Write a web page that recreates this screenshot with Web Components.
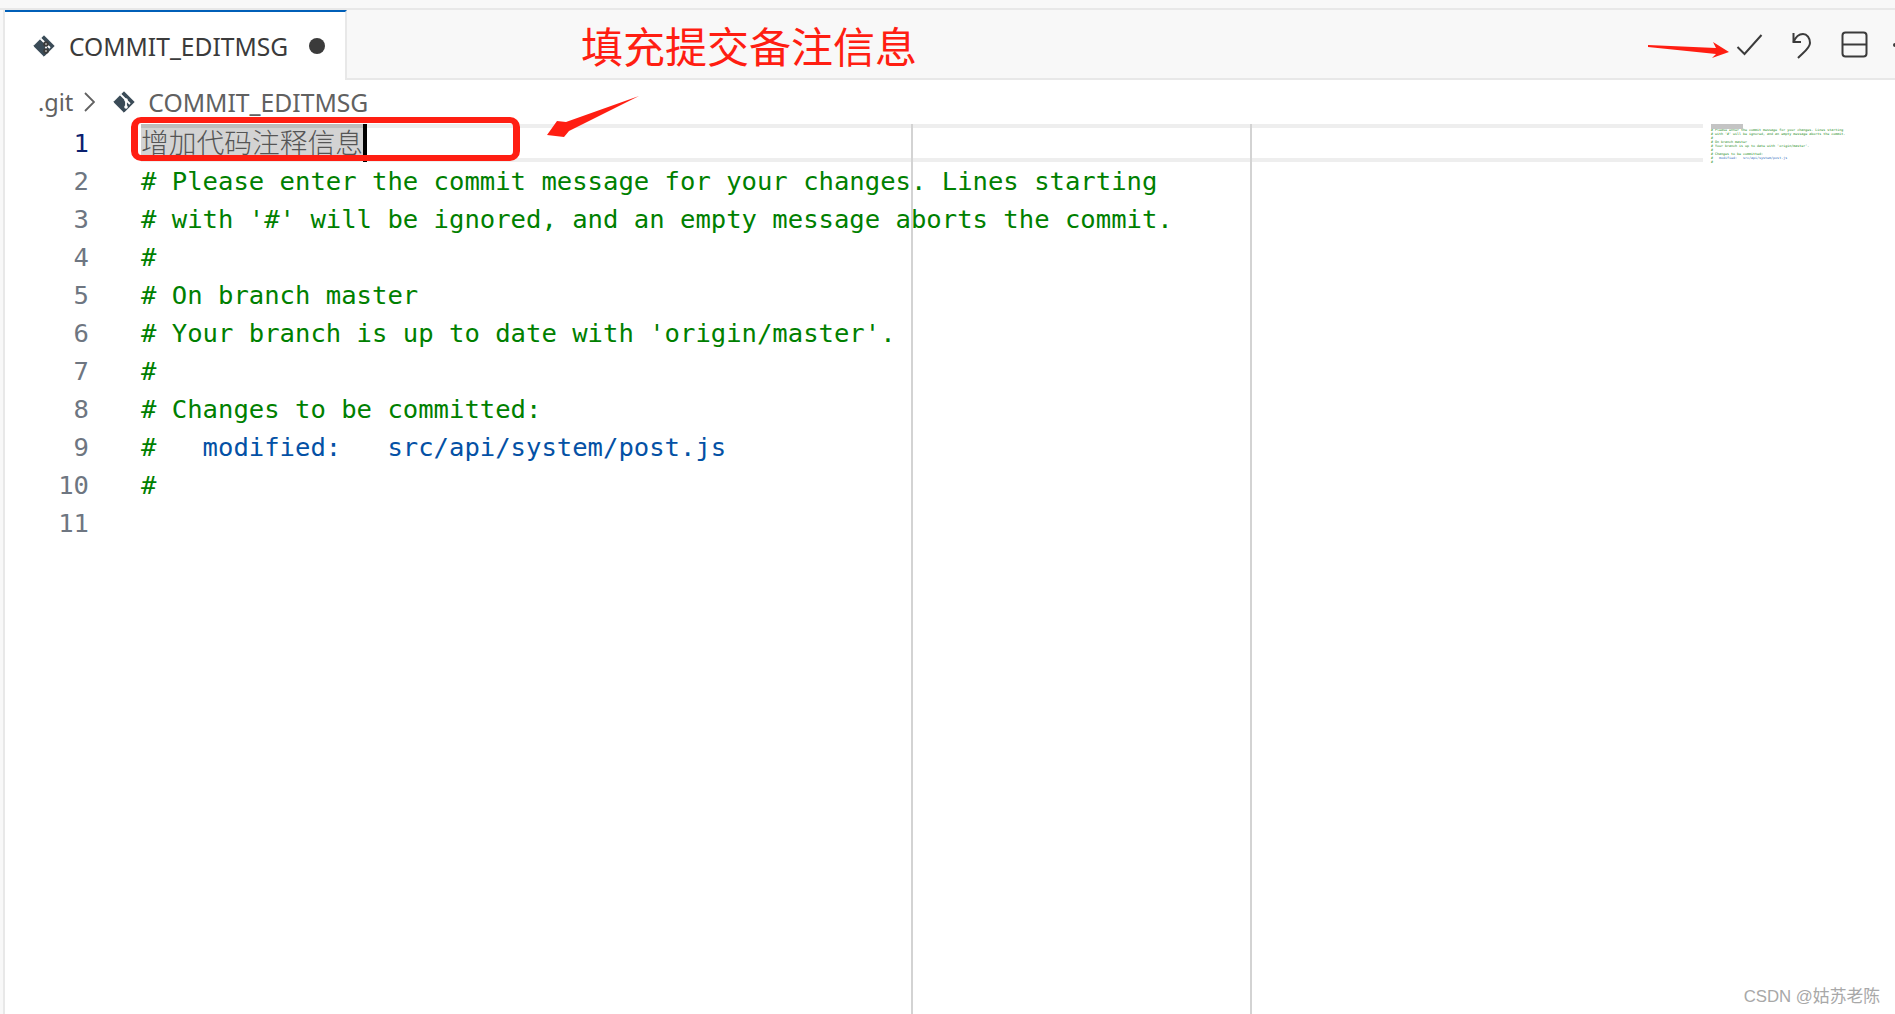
<!DOCTYPE html>
<html lang="zh">
<head>
<meta charset="utf-8">
<title>COMMIT_EDITMSG</title>
<style>
  html, body { margin: 0; height: 100%; overflow: hidden; background: #fff; }
</style>
</head>
<body>
<editor-window>
  <tab-bar slot="tabs"></tab-bar>
  <bread-crumbs slot="crumbs"></bread-crumbs>
  <code-editor slot="editor">
    <code-line n="1" active><span class="sel">增加代码注释信息</span></code-line>
    <code-line n="2"># Please enter the commit message for your changes. Lines starting</code-line>
    <code-line n="3"># with '#' will be ignored, and an empty message aborts the commit.</code-line>
    <code-line n="4">#</code-line>
    <code-line n="5"># On branch master</code-line>
    <code-line n="6"># Your branch is up to date with 'origin/master'.</code-line>
    <code-line n="7">#</code-line>
    <code-line n="8"># Changes to be committed:</code-line>
    <code-line n="9">#   <span style="color:#0451a5">modified:   src/api/system/post.js</span></code-line>
    <code-line n="10">#</code-line>
    <code-line n="11"></code-line>
  </code-editor>
</editor-window>
<note-layer></note-layer>

<script>
const gitIcon = (size) => `
  <svg width="${size}" height="${size}" viewBox="0 0 22 22" style="flex:none;display:block">
    <path d="M11 .8 21.2 11 11 21.2.8 11Z" fill="#3a4b57" stroke="#3a4b57" stroke-width="1" stroke-linejoin="round"/>
    <path d="M7.5 3.5 13 9M13 9v8M13 9l4 4" fill="none" stroke="#fff" stroke-width="1.8"/>
    <circle cx="13" cy="9" r="1.8" fill="#fff"/>
    <circle cx="13" cy="16" r="1.8" fill="#fff"/>
  </svg>`;

class EditorWindow extends HTMLElement {
  constructor() {
    super();
    this.attachShadow({ mode: 'open' });
    this.shadowRoot.innerHTML = `
      <style>
        :host { display: block; height: 1014px; background: #f8f8f8; overflow: hidden; }
        .top { height: 8px; border-bottom: 2px solid #e8e8e8; }
        .frame { margin-left: 3px; border-left: 2px solid #e8e8e8; background: #fff; height: 1004px; }
      </style>
      <div class="top"></div>
      <div class="frame">
        <slot name="tabs"></slot>
        <slot name="crumbs"></slot>
        <slot name="editor"></slot>
      </div>`;
  }
}

class TabBar extends HTMLElement {
  constructor() {
    super();
    this.attachShadow({ mode: 'open' });
    this.shadowRoot.innerHTML = `
      <style>
        :host { display: flex; height: 68px; background: #f8f8f8; border-bottom: 2px solid #e8e8e8; font-family: "Noto Sans", sans-serif; }
        .tab { display: flex; align-items: center; box-sizing: border-box; width: 342px; height: 70px; padding: 0 0 0 28px; background: #fff;
               border-top: 2px solid #005fb8; border-right: 2px solid #e8e8e8; color: #3b3b3b; font-size: 24.6px; }
        .name { margin-left: 14px; width: 218px; white-space: nowrap; }
        .dot { width: 16px; height: 16px; margin-left: 22px; border-radius: 50%; background: #3b3b3b; }
        .actions { display: flex; align-items: center; gap: 24px; margin-left: auto; margin-right: -25px; padding-top: 2px; }
        svg { display: block; fill: none; stroke: #3b3b3b; stroke-width: 2; }
      </style>
      <div class="tab">
        ${gitIcon(22)}
        <span class="name">COMMIT_EDITMSG</span>
        <span class="dot"></span>
      </div>
      <div class="actions">
        <svg width="28" height="28" viewBox="0 0 28 28"><path d="M1.5 16 8.5 23 25.5 4"/></svg>
        <svg width="28" height="28" viewBox="0 0 28 28"><path d="M5.5 2V11H13"/><path d="M5.5 11C8 5 12 3 15 3C19 3 22 7 22 12C22 17 16 21 10 27"/></svg>
        <svg width="28" height="28" viewBox="0 0 28 28"><rect x="2.500" y="1.500" width="24" height="24" rx="3"/><path d="M2.500 13.500H26.500"/></svg>
        <svg width="28" height="28" viewBox="0 0 28 28"><circle cx="3" cy="14" r="2" fill="#3b3b3b" stroke="none"/></svg>
      </div>`;
  }
}

class BreadCrumbs extends HTMLElement {
  constructor() {
    super();
    this.attachShadow({ mode: 'open' });
    this.shadowRoot.innerHTML = `
      <style>
        :host { display: flex; align-items: center; height: 44px; padding-left: 33px; color: #616161; font: 24.700px "Noto Sans", sans-serif; white-space: nowrap; }
        .git { font-size: 23.500px; }
        .chev { margin: 0 18px 0 11px; display: block; }
        .name { margin-left: 13px; }
      </style>
      <span class="git">.git</span>
      <svg class="chev" width="11" height="20" viewBox="0 0 11 20"><path d="M1 1 10 10 1 19" fill="none" stroke="#616161" stroke-width="1.800"/></svg>
      ${gitIcon(22)}
      <span class="name">COMMIT_EDITMSG</span>`;
  }
}

class CodeLine extends HTMLElement {
  constructor() {
    super();
    this.attachShadow({ mode: 'open' });
  }
  connectedCallback() {
    const active = this.hasAttribute('active');
    this.shadowRoot.innerHTML = `
      <style>
        :host { display: grid; grid-template-columns: 84px 1562px; column-gap: 52px; height: 38px; line-height: 38px; white-space: pre; color: #008000; }
        .num { text-align: right; color: ${active ? '#0b216f' : '#6e7681'}; }
        .text { box-sizing: border-box; height: 38px; }
        .text.active { display: flex; border-top: 4px solid #eee; border-bottom: 4px solid #eee; line-height: 30px; }
        .sel { display: block; margin: -4px 0 -3px; height: 37px; width: 222px; background: #d3d3d3; border-top: 4px solid #bdbdbd; border-bottom: 4px solid #bdbdbd; box-sizing: border-box;
               color: #555; font: 300 27.750px/26px "Noto Sans CJK SC", sans-serif; }
        .caret { width: 4px; height: 38px; margin-top: -4px; background: #000; }
      </style>
      <div class="num">${this.getAttribute('n')}</div>
      ${active
        ? `<div class="text active"><div class="sel">${this.textContent}</div><div class="caret"></div></div>`
        : `<div class="text"><slot></slot></div>`}`;
  }
}

class MiniMap extends HTMLElement {
  constructor() {
    super();
    this.attachShadow({ mode: 'open' });
    const rows = [
      ['', ''],
      ['# Please enter the commit message for your changes. Lines starting', ''],
      ["# with '#' will be ignored, and an empty message aborts the commit.", ''],
      ['#', ''],
      ['# On branch master', ''],
      ["# Your branch is up to date with 'origin/master'.", ''],
      ['#', ''],
      ['# Changes to be committed:', ''],
      ['#   ', 'modified:   src/api/system/post.js'],
      ['#', '']
    ];
    this.shadowRoot.innerHTML = `
      <style>
        :host { display: block; position: absolute; left: 1706px; top: 0; width: 180px; font: 3.330px/4px "DejaVu Sans Mono", monospace; color: #128a12; }
        .thumb { position: absolute; left: 0; top: 0; width: 32px; height: 5px; background: #c4c4c4; }
        .row { height: 4px; white-space: pre; }
        span { color: #2a68b8; }
      </style>
      <div class="thumb"></div>
      ${rows.map(r => `<div class="row">${r[0]}<span>${r[1]}</span></div>`).join('')}`;
  }
}

class CodeEditor extends HTMLElement {
  constructor() {
    super();
    this.attachShadow({ mode: 'open' });
    this.shadowRoot.innerHTML = `
      <style>
        :host { display: block; position: relative; height: 890px; font: 25.580px "DejaVu Sans Mono", monospace; }
        .ruler { position: absolute; top: 0; bottom: 0; width: 2px; background: #d3d3d3; }
      </style>
      <slot></slot>
      <div class="ruler" style="left:906px"></div>
      <div class="ruler" style="left:1245px"></div>
      <mini-map></mini-map>`;
  }
}

class NoteLayer extends HTMLElement {
  constructor() {
    super();
    this.attachShadow({ mode: 'open' });
    this.shadowRoot.innerHTML = `
      <style>
        :host { display: block; position: absolute; inset: 0; pointer-events: none; }
        svg { position: absolute; left: 0; top: 0; }
        .title { position: absolute; left: 581px; top: 15px; color: #ff1e12; font: 42px/60px "Noto Sans CJK SC", sans-serif; white-space: nowrap; }
        .box { position: absolute; left: 131px; top: 117px; width: 389px; height: 44px; box-sizing: border-box; border: 6px solid #ff1e12; border-left-width: 7px; border-right-width: 7px; border-radius: 10px; }
        .mark { position: absolute; right: 15px; bottom: 5px; color: #a8a8a8; font: 16.800px/24px "Liberation Sans", "Noto Sans CJK SC", sans-serif; white-space: nowrap; }
      </style>
      <div class="title">填充提交备注信息</div>
      <div class="box"></div>
      <svg width="1895" height="1014" fill="#ff1e12">
        <path d="M639 96 566 122 557 121 547 135 564 137 569 131Z"/>
        <path d="M1648 45 1716 48 1713 42 1729 52 1712 58 1716 54 1648 47Z"/>
      </svg>
      <div class="mark">CSDN @姑苏老陈</div>`;
  }
}

customElements.define('mini-map', MiniMap);
customElements.define('code-line', CodeLine);
customElements.define('code-editor', CodeEditor);
customElements.define('bread-crumbs', BreadCrumbs);
customElements.define('tab-bar', TabBar);
customElements.define('editor-window', EditorWindow);
customElements.define('note-layer', NoteLayer);
</script>
</body>
</html>
